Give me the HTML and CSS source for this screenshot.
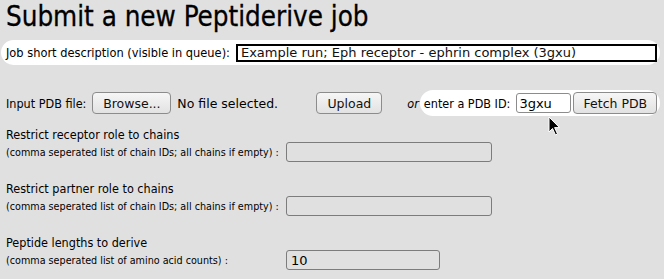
FILE: index.html
```html
<!DOCTYPE html>
<html lang="en">
<head>
  <meta charset="UTF-8" />
  <title>Submit a new Peptiderive job</title>
  <link rel="stylesheet" href="styles.css">
</head>
<body>
  <h1 class="page-title">Submit a new Peptiderive job</h1>

  <div class="job-row">
    <label for="jobDesc">Job short description (visible in queue):</label>
    <input id="jobDesc" class="job-desc" type="text" value="Example run; Eph receptor - ephrin complex (3gxu)">
  </div>

  <div class="upload-row">
    <span class="upload-label">Input PDB file:</span>
    <span class="btn browse">Browse...</span>
    <span class="no-file">No file selected.</span>
    <button class="btn upload" type="button">Upload</button>
    <em class="or">or</em>
    <div class="fetch-pill">
      <span>enter a PDB ID:</span>
      <input class="pdb-id" type="text" value="3gxu">
      <button class="btn fetch" type="button">Fetch PDB</button>
    </div>
  </div>

  <div class="field">
    <div class="field-title">Restrict receptor role to chains</div>
    <div class="field-row">
      <span class="hint">(comma seperated list of chain IDs; all chains if empty) :</span>
      <input class="chain-input" type="text" value="">
    </div>
  </div>

  <div class="field">
    <div class="field-title">Restrict partner role to chains</div>
    <div class="field-row">
      <span class="hint">(comma seperated list of chain IDs; all chains if empty) :</span>
      <input class="chain-input" type="text" value="">
    </div>
  </div>

  <div class="field">
    <div class="field-title">Peptide lengths to derive</div>
    <div class="field-row">
      <span class="hint">(comma seperated list of amino acid counts) :</span>
      <input class="chain-input short" type="text" value="10">
    </div>
  </div>

  <!-- mouse pointer -->
  <svg class="cursor" width="14" height="21" viewBox="0 0 14 21">
    <path d="M1 1 L1 16 L4.5 12.5 L7.5 19 L9.5 18 L6.6 11.6 L11.5 11.6 Z" fill="#000" stroke="#fff" stroke-width="1"/>
  </svg>
</body>
</html>
```

FILE: styles.css
```css
body {
  margin: 0;
  background-color: #e0e0e0;
  font-family: "DejaVu Sans", Verdana, sans-serif;
  font-stretch: condensed;
  font-size: 12px;
  color: #000;
  position: relative;
  height: 279px;
  overflow: hidden;
  white-space: nowrap;
}

.page-title {
  margin: 0;
  padding: 1px 0 0 6px;
  font-size: 27.5px;
  font-weight: normal;
  line-height: 30px;
  height: 38px;
  -webkit-text-stroke: 0.3px #000;
}

/* white pill rows */
.job-row {
  display: flex;
  align-items: center;
  margin: 1px 4px 0 1px;
  padding: 0 3px 0 5px;
  height: 25px;
  background: #fff;
  border-radius: 13px;
}

.job-row label {
  font-size: 12.7px;
  margin-right: 6px;
}

.job-desc {
  flex: 1;
  height: 18px;
  box-sizing: border-box;
  margin: 0;
  padding: 0 3px;
  border: 2px solid #000;
  background: #fff;
  font-family: "DejaVu Sans", Verdana, sans-serif;
  font-stretch: normal;
  font-size: 13px;
  color: #111;
}

.upload-row {
  display: flex;
  align-items: center;
  margin-top: 25px;
  padding-left: 6px;
  height: 26px;
}

.upload-row > * {
  flex-shrink: 0;
}

.upload-label {
  font-size: 12.5px;
  margin-right: 6px;
}

.btn {
  display: inline-flex;
  align-items: center;
  justify-content: center;
  box-sizing: border-box;
  height: 22px;
  padding: 0 6px;
  border: 1px solid #8c8c8c;
  border-radius: 4px;
  background: linear-gradient(#f6f6f6, #e2e2e2);
  font-family: "DejaVu Sans", Verdana, sans-serif;
  font-stretch: normal;
  font-size: 12.5px;
  color: #111;
}

.browse {
  width: 79px;
}

.no-file {
  width: 139px;
  margin-left: 6px;
  font-stretch: normal;
  font-size: 12.5px;
}

.upload {
  width: 66px;
}

.or {
  margin-left: 25px;
  margin-right: 1px;
  font-size: 12.5px;
}

.fetch-pill {
  display: flex;
  align-items: center;
  flex: 1 0 auto;
  height: 26px;
  margin-right: 4px;
  padding: 0 3px 0 4px;
  background: #fff;
  border-radius: 13px;
  font-size: 12.5px;
}

.pdb-id {
  width: 55px;
  height: 20px;
  box-sizing: border-box;
  margin: 0 2px 0 6px;
  padding: 0 2px;
  border: 1px solid #8c8c8c;
  border-radius: 3px;
  background: #fff;
  font-family: "DejaVu Sans", Verdana, sans-serif;
  font-stretch: normal;
  font-size: 13px;
}

.fetch {
  width: 84px;
}

/* chain / length fields */
.field {
  padding-left: 6px;
  margin-top: 11px;
}

.field + .field {
  margin-top: 19px;
}

.field-title {
  font-size: 12.5px;
  line-height: 15px;
}

.field-row {
  display: grid;
  grid-template-columns: 280px auto;
  align-items: center;
}

.hint {
  font-size: 10.7px;
}

.chain-input {
  width: 206px;
  height: 20px;
  box-sizing: border-box;
  margin: 0;
  padding: 0 4px;
  border: 1px solid #7c7c7c;
  border-radius: 3px;
  background: transparent;
  font-family: "DejaVu Sans", Verdana, sans-serif;
  font-stretch: normal;
  font-size: 13px;
}

.chain-input.short {
  width: 154px;
}

.cursor {
  position: absolute;
  left: 548px;
  top: 116px;
}
```
